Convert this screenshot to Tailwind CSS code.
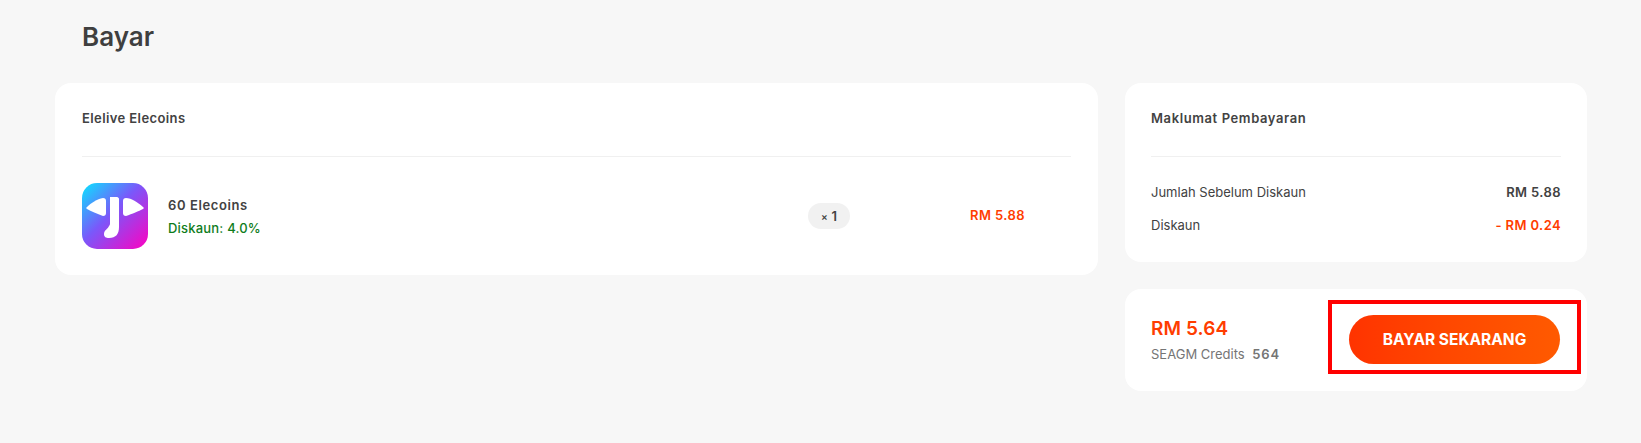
<!DOCTYPE html>
<html lang="en">
<head>
<meta charset="UTF-8">
<title>Bayar</title>
<script src="https://cdn.jsdelivr.net/npm/@tailwindcss/browser@4"></script>
</head>
<body class="bg-[#f7f7f7] font-['Inter',sans-serif] text-[#424242] h-[443px] overflow-hidden">
  <div class="pl-[55px] pr-[54px]">
    <h1 class="pl-[27px] pt-[20px] h-[83px] text-[26px] leading-[34px] font-semibold text-[#3f3f3f]">Bayar</h1>
    <div class="flex items-start gap-[27px]">
      <!-- item list -->
      <div class="flex-1 h-[192px] bg-white rounded-[16px] px-[27px]">
        <div class="h-[74px] border-b border-[#f0f0f0] pt-[25px] text-[13px] leading-[20px] font-semibold tracking-[0.4px]">Elelive Elecoins</div>
        <div class="flex items-center mt-[26px]">
          <svg class="w-[66px] h-[66px] shrink-0" viewBox="0 0 66 66">
            <defs>
              <linearGradient id="logo" x1="0" y1="0" x2="1" y2="1">
                <stop offset="0" stop-color="#08e6ff"/>
                <stop offset="0.45" stop-color="#7a58fa"/>
                <stop offset="1" stop-color="#ff00c0"/>
              </linearGradient>
            </defs>
            <rect width="66" height="66" rx="15" fill="url(#logo)"/>
            <path d="M5 24 C9 20 15 16 21 15 C23 15 24 16 24 18 L24 30 C24 32 23 33 21 33 C15 31 9 28 5 26 C4 25 4 25 5 24Z" fill="#fff"/>
            <path d="M61 24 C57 20 49 15 44 15 C42 15 41 16 41 18 L41 30 C41 32 42 33 44 33 C50 31 57 28 61 26 C62 25 62 25 61 24Z" fill="#fff"/>
            <path d="M28 14 L35 14 C36 14 37 15 37 16 L37 44 C37 51 34 55 27 55 C24 55 22 54 22 51 C22 47 26 46 27 43 C28 42 28 41 28 40 L28 14Z" fill="#fff"/>
          </svg>
          <div class="ml-[20px] w-[640px]">
            <div class="text-[13px] leading-[20px] font-semibold tracking-[0.6px]">60 Elecoins</div>
            <div class="mt-[3px] text-[13px] leading-[20px] font-medium tracking-[0.2px] text-[#0f7d1c]">Diskaun: 4.0%</div>
          </div>
          <div class="w-[42px] h-[26px] shrink-0 rounded-full bg-[#f1f1f1] flex items-center justify-center gap-[4px] text-[13px] leading-none font-semibold">
            <span class="text-[10px] leading-none">×</span><span>1</span>
          </div>
          <div class="flex-1 pl-[74px] text-center text-[13px] font-semibold tracking-[0.4px] text-[#ff3d00]">RM 5.88</div>
        </div>
      </div>

      <div class="w-[462px] shrink-0 flex flex-col gap-[27px]">
        <!-- payment details -->
        <div class="h-[179px] bg-white rounded-[16px] px-[26px]">
          <div class="h-[74px] border-b border-[#f0f0f0] pt-[25px] text-[13px] leading-[20px] font-semibold tracking-[0.6px]">Maklumat Pembayaran</div>
          <div class="flex justify-between mt-[25px] text-[13px] leading-[20px]">
            <span>Jumlah Sebelum Diskaun</span>
            <span class="font-semibold tracking-[0.4px]">RM 5.88</span>
          </div>
          <div class="flex justify-between mt-[13px] text-[13px] leading-[20px]">
            <span>Diskaun</span>
            <span class="font-semibold tracking-[0.4px] text-[#ff3d00]">- RM 0.24</span>
          </div>
        </div>
        <!-- pay now -->
        <div class="h-[102px] bg-white rounded-[16px] pl-[26px] pr-[27px] flex items-center justify-between">
          <div>
            <div class="text-[19px] leading-[26px] font-semibold tracking-[0.1px] text-[#ff3d00]">RM 5.64</div>
            <div class="mt-[2px] text-[13px] leading-[20px] text-[#757575]">SEAGM Credits <span class="ml-[4px] font-semibold tracking-[0.8px]">564</span></div>
          </div>
          <div class="relative -mt-[1px]">
            <button class="block w-[211px] h-[49px] rounded-full bg-gradient-to-r from-[#ff3300] to-[#ff5a00] text-white text-[15.5px] font-bold">BAYAR SEKARANG</button>
            <div class="absolute -left-[21px] -right-[21px] -top-[15px] -bottom-[10px] border-4 border-[#ff0000]"></div>
          </div>
        </div>
      </div>
    </div>
  </div>
</body>
</html>
